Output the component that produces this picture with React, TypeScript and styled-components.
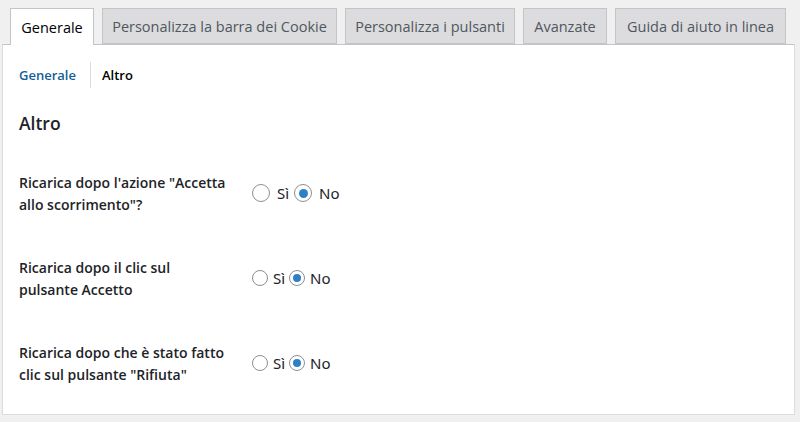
import React from "react";
import styled, { createGlobalStyle } from "styled-components";

const Global = createGlobalStyle`
  html, body { margin: 0; padding: 0; background: #f0f0f1; }
  body { font-family: "Noto Sans", "Open Sans", sans-serif; color: #1d2327; }
`;

const Page = styled.div`
  width: 800px;
  height: 422px;
  padding-top: 8px;
  box-sizing: border-box;
  overflow: hidden;
`;

const TabBar = styled.div`
  display: flex;
  gap: 8px;
  padding-left: 10px;
  height: 36px;
  position: relative;
  z-index: 1;
`;

const Tab = styled.div<{ $active?: boolean; $w: number }>`
  display: flex;
  align-items: center;
  justify-content: center;
  box-sizing: border-box;
  height: ${(p) => (p.$active ? "37px" : "36px")};
  width: ${(p) => p.$w}px;
  border: 1px solid #c3c4c7;
  border-bottom: ${(p) => (p.$active ? "none" : "1px solid #c3c4c7")};
  background: ${(p) => (p.$active ? "#ffffff" : "#dcdcde")};
  color: ${(p) => (p.$active ? "#000000" : "#50575e")};
  font-family: "Open Sans", "Noto Sans", sans-serif;
  font-size: 14.5px;
  font-weight: 500;
  white-space: nowrap;
`;

const Panel = styled.div`
  margin: 0 5px 0 2px;
  height: 371px;
  box-sizing: border-box;
  background: #ffffff;
  border: 1px solid #dcdcde;
  border-top-color: #c3c4c7;
  padding: 0 16px;
`;

const SubNav = styled.div`
  display: flex;
  align-items: center;
  margin-top: 17px;
  height: 26px;
  font-family: "Open Sans", "Noto Sans", sans-serif;
  font-size: 13px;
  font-weight: 600;
`;

const SubLink = styled.span<{ $current?: boolean }>`
  color: ${(p) => (p.$current ? "#135e96" : "#000000")};
`;

const Sep = styled.span`
  width: 1px;
  align-self: stretch;
  background: #dcdcde;
  margin: 0 11px 0 14px;
`;

const Heading = styled.h2`
  margin: 22px 0 0;
  font-family: "Open Sans", "Noto Sans", sans-serif;
  font-size: 17.5px;
  line-height: 26px;
  font-weight: 600;
  color: #1d2327;
`;

const Rows = styled.div`
  margin-top: 16px;
  display: flex;
  flex-direction: column;
`;

const Row = styled.div`
  display: grid;
  grid-template-columns: 233px 1fr;
  height: 85px;
  padding-top: 20px;
  box-sizing: border-box;
`;

const Label = styled.div`
  font-family: "Open Sans", "Noto Sans", sans-serif;
  font-size: 14px;
  line-height: 22px;
  font-weight: 600;
  color: #1d2327;
  white-space: nowrap;
`;

const RadioGroup = styled.div<{ $wide?: boolean }>`
  display: flex;
  align-items: center;
  height: 22px;
  margin-top: 10px;
  font-size: 15px;
  color: #1d2327;
  gap: ${(p) => (p.$wide ? "5px" : "4px")};
`;

const Option = styled.label<{ $wide?: boolean }>`
  display: flex;
  align-items: center;
  gap: ${(p) => (p.$wide ? "7px" : "5px")};
`;

const Radio = styled.span<{ $checked?: boolean; $size: number }>`
  box-sizing: border-box;
  width: ${(p) => p.$size}px;
  height: ${(p) => p.$size}px;
  border-radius: 50%;
  border: 1px solid #8c8f94;
  background: #fff;
  display: flex;
  align-items: center;
  justify-content: center;
  &::after {
    content: "";
    display: ${(p) => (p.$checked ? "block" : "none")};
    width: ${(p) => Math.round(p.$size / 2)}px;
    height: ${(p) => Math.round(p.$size / 2)}px;
    border-radius: 50%;
    background: #2f7fc6;
  }
`;

const tabs = [
  { t: "Generale", w: 84, a: true },
  { t: "Personalizza la barra dei Cookie", w: 235 },
  { t: "Personalizza i pulsanti", w: 170 },
  { t: "Avanzate", w: 84 },
  { t: "Guida di aiuto in linea", w: 171 },
];

const rows = [
  { l: ["Ricarica dopo l'azione \"Accetta", "allo scorrimento\"?"], wide: true },
  { l: ["Ricarica dopo il clic sul", "pulsante Accetto"] },
  { l: ["Ricarica dopo che è stato fatto", "clic sul pulsante \"Rifiuta\""] },
];

export default function App() {
  return (
    <Page>
      <Global />
      <TabBar>
        {tabs.map((t) => (
          <Tab key={t.t} $active={t.a} $w={t.w}>
            {t.t}
          </Tab>
        ))}
      </TabBar>
      <Panel>
        <SubNav>
          <SubLink $current>Generale</SubLink>
          <Sep />
          <SubLink>Altro</SubLink>
        </SubNav>
        <Heading>Altro</Heading>
        <Rows>
          {rows.map((r, i) => (
            <Row key={i}>
              <Label>
                {r.l[0]}
                <br />
                {r.l[1]}
              </Label>
              <RadioGroup $wide={r.wide}>
                <Option $wide={r.wide}>
                  <Radio $size={r.wide ? 18 : 16} />
                  Sì
                </Option>
                <Option $wide={r.wide}>
                  <Radio $size={r.wide ? 18 : 16} $checked />
                  No
                </Option>
              </RadioGroup>
            </Row>
          ))}
        </Rows>
      </Panel>
    </Page>
  );
}
